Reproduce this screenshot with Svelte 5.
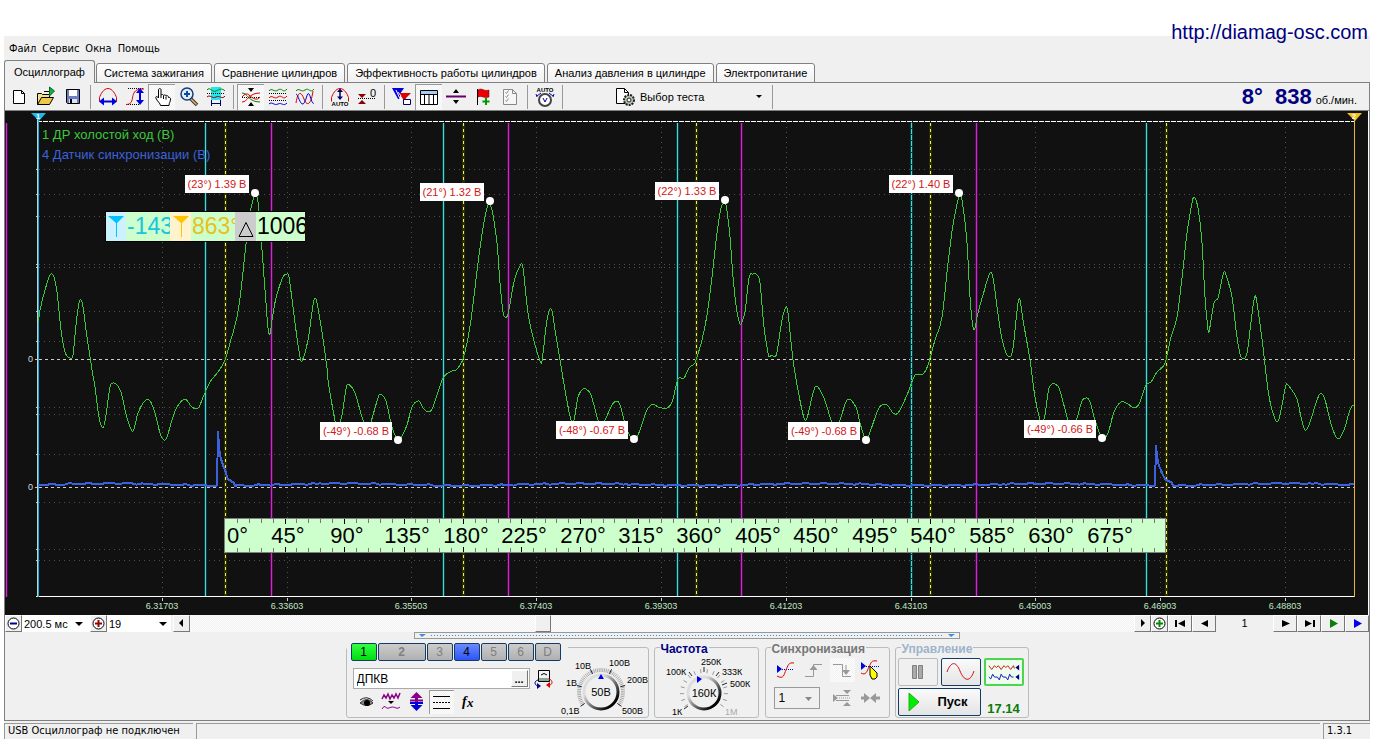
<script lang="ts">
    type Point = [number, number];

    const menu = ["Файл", "Сервис", "Окна", "Помощь"];
    const tabs = [
        "Осциллограф",
        "Система зажигания",
        "Сравнение цилиндров",
        "Эффективность работы цилиндров",
        "Анализ давления в цилиндре",
        "Электропитание",
    ];
    let activeTab = $state(0);

    const dots = (y: number, x1 = 2, x2 = 20) =>
        `<path d="M${x1} ${y}H${x2}" stroke="#000" stroke-dasharray="1 1"/>`;

    const icons: Record<string, string> = {
        new: `<path d="M5.500 4.500h8l3 3v10h-11z" fill="#fff" stroke="#000"/><path d="M13.500 4.500v3h3" fill="none" stroke="#000"/>`,
        open: `<path d="M2.500 18.500v-11h4l1 1h7v3" fill="#f5e08a" stroke="#000"/><path d="M2.500 18.500l4-7h12l-4 7z" fill="#ecc94b" stroke="#000"/><path d="M9 5.500h5" stroke="#000"/><path d="M14.500 1v9l5-5z" fill="#18b030" stroke="#063"/>`,
        save: `<path d="M4.500 3.500h13v14h-12l-1-1z" fill="#6b7fc0" stroke="#000"/><path d="M7 4h8v6H7z" fill="#fff"/><path d="M7 13h8v4H7z" fill="#dfe4ee"/><path d="M8 13h2v4H8z" fill="#000"/>`,
        widthFit: `<path d="M2.500 15.500v-4c1-3 4-9 8.500-9s7.500 6 8.500 9v4" fill="none" stroke="#d00"/><path d="M5 15.500h12" stroke="#00d" stroke-width="2"/><path d="M2 15.500l5-4v8zM20 15.500l-5-4v8z" fill="#00d"/>`,
        heightFit: `${dots(2.5, 4, 20)}${dots(18.5, 2, 16)}<path d="M2 18.500c7 0 6-6 7-9s2-7 11-6.500" fill="none" stroke="#d00"/><path d="M16 5v11" stroke="#00d" stroke-width="2"/><path d="M16 2l4 5h-8zM16 19l4-5h-8z" fill="#00d"/>`,
        hand: `<path d="M7.500 12V4c0-2 2.500-2 2.500 0v5c1-1 2.500-.5 2.500.5 1-1 2.500-.5 2.500.5 1-.8 2.500-.3 2.500 1.500 1-.4 2 .3 2 1.500 0 3-1.500 3.500-1.500 6.500H9.500c0-2-3.500-4.500-4.700-7.500-.5-1.500 1.200-2.200 2.700 0z" fill="#fff" stroke="#000"/><path d="M10 9v3M12.500 10v3M15 10.500v3" stroke="#000"/>`,
        zoom: `<path d="M12.500 12.500l6.500 6.500" stroke="#333" stroke-width="3.500"/><path d="M13 13l5.500 5.500" stroke="#f0b060" stroke-width="1.500"/><circle cx="9" cy="8" r="6" fill="#dff0ff" stroke="#1b3c78" stroke-width="1.500"/><path d="M9 5v6M6 8h6" stroke="#0b4aa8" stroke-width="2"/>`,
        cursor: `<path d="M6 1h10v13H6z" fill="#22e6ef"/><path d="M2 4c3-4 5 3 9 1s6-3 9 0" fill="none" stroke="#080"/>${dots(7.5)}<path d="M2 11c3-3 5 2 9 0s6 3 9-1" fill="none" stroke="#900"/><path d="M7 17.500h8M6.500 14v6M15.500 14v6" stroke="#006"/>`,
        cross: `${dots(11.5)}<path d="M2 7c6 0 6 9 18 9" fill="none" stroke="#080"/><path d="M2 16c6 0 6-9 18-9" fill="none" stroke="#d00"/><path d="M2 11q4-5 7-2t6 4 5-2" fill="none" stroke="#d00"/><path d="M8 2h6l-3 4zM8 20h6l-3-4z" fill="#000"/>`,
        waves3: `<path d="M2 5c3-4 5 2 9-1s5 4 9-1" fill="none" stroke="#080"/>${dots(7.5)}<path d="M2 12c3-4 5 2 9-1s5 4 9-1" fill="none" stroke="#d00"/>${dots(14.5)}<path d="M2 18c3-3 5 2 9 0s5 3 9-1" fill="none" stroke="#00d"/>`,
        waves2: `<path d="M2 5c3-4 5 2 9-1s5 4 9-1" fill="none" stroke="#080"/><path d="M2 17c2-12 5-12 8-4s7 6 9-8" fill="none" stroke="#d00"/><path d="M2 8c2 0 4 11 7 10s4-13 6-10 3 11 5 9" fill="none" stroke="#00d"/>`,
        auto: `<path d="M2.500 15.500v-4c1-3 4-9 8.500-9s7.500 6 8.500 9v4" fill="none" stroke="#d00"/><path d="M11 4v9" stroke="#006" stroke-width="1.500"/><path d="M11 2.500l3 3.500H8zM11 14l3-3.500H8z" fill="#006"/><text x="11" y="20" font-size="6" font-weight="700" text-anchor="middle">AUTO</text>`,
        zero: `${dots(12.5)}<path d="M2 8h8l-4 4zM2 18h8l-4-4z" fill="#800"/><text x="17" y="11" font-size="11" text-anchor="middle">0</text>`,
        trigger: `<path d="M1 2h12L9 8v5H7z" fill="#00d"/><path d="M8 7h12l-5 5-1 4z" fill="#d00"/><path d="M7 6l3 4M5 4l5 11" stroke="#fff"/><path d="M12.500 13.500h7v5h-7z" fill="#fff" stroke="#006"/>`,
        table: `<path d="M2.500 4.500h17v14h-17z" fill="#fff" stroke="#000"/><path d="M3 5h16v3H3z" fill="#a8cdf5"/><path d="M3 8.500h16M6.500 8v10M11 8v10M15.500 8v10" stroke="#000"/>`,
        split: `<path d="M1 10.500h20" stroke="#606" stroke-width="2"/><path d="M8 7h6l-3-4zM8 14h6l-3 4z" fill="#000"/>`,
        flag: `<path d="M5.500 3v16" stroke="#000"/><path d="M6 4c4-3 6 2 11 0v7c-5 2-7-2-11 0z" fill="#e00" stroke="#600" stroke-width=".5"/><path d="M14 12v7M10.500 15.500h7" stroke="#090" stroke-width="2"/>`,
        check: `<path d="M4.500 3.500h9l4 4v11h-13z" fill="#f6f6f6" stroke="#888"/><path d="M13.500 3.500v4h4M6.500 6.500l1 1 2-3M6.500 10.500l1 1 2-3M6.500 14.500l1 1 2-3" fill="none" stroke="#888"/>`,
        meter: `<text x="11" y="6" font-size="6" font-weight="700" text-anchor="middle">AUTO</text><circle cx="11" cy="14" r="6" fill="#fff" stroke="#444" stroke-width="2"/><path d="M9 12l2 4 2-4" fill="none" stroke="#00a"/><path d="M3 10l4-3M19 10l-4-3M2 8l1 3M20 8l-1 3" stroke="#00a"/>`,
        eye: `<path d="M5 12q7-7 13 0-6 5-13 0z" fill="#888" stroke="#333"/><circle cx="12" cy="12" r="3" fill="#000"/><path d="M5 9q7-5 13 1" fill="none" stroke="#222"/>`,
        noise: `<path d="M2 8l2-4 2 3 2-4 2 5 2-4 2 3 2-4 2 4 2-5" fill="none" stroke="#808" stroke-width="1.500"/><path d="M8 10h6l-3 3z" fill="#000"/><path d="M2 18q2-4 3.500-2t3.500 1 3.500-1 3.500 1 4-1" fill="none" stroke="#808"/>`,
        updown: `<path d="M10 4h3v7h-3z" fill="#808"/><path d="M10 11h3v7h-3z" fill="#00d"/><path d="M11.500 1l6 6h-12z" fill="#808"/><path d="M11.500 20l6-6h-12z" fill="#00d"/><path d="M5 9.500h13" stroke="#808" stroke-width="2"/><path d="M5 12h13" stroke="#00d" stroke-width="2"/>`,
        lines: `<path d="M3 5.500h17M3 17.500h17" stroke="#000"/><path d="M3 11.500h17" stroke="#000" stroke-dasharray="2 1"/>`,
        fx: `<text x="7" y="15" font-size="14" font-style="italic" font-weight="700" font-family="Liberation Serif, serif">f</text><text x="12" y="16" font-size="13" font-style="italic" font-weight="700" font-family="Liberation Serif, serif">x</text>`,
        swap: `<path d="M6.500 2.500h11v11h-11z" fill="#f4f4f4" stroke="#000"/><path d="M7 10h10v3H7z" fill="#8a9"/><path d="M9 7q3-3 6 0" fill="none" stroke="#000"/><path d="M6 12c-4 1-4 5 0 6" fill="none" stroke="#008"/><path d="M5 15v6l4-3z" fill="#008"/><path d="M17 11c4 1 4 6 0 6" fill="none" stroke="#d00"/><path d="M18 14v6l-4-3z" fill="#d00"/>`,
        syncAuto: `<path d="M2 6l5 4-5 4z" fill="#00d"/><path d="M5 10.500h14" stroke="#00d" stroke-dasharray="1 1"/><path d="M2 17c7 4 7-2 9-6s2-8 8-7" fill="none" stroke="#d00"/>`,
        rise: `<path d="M2 17.500h8.500V5.500H19" fill="none" stroke="#999"/><path d="M10.500 6l4 5h-8z" fill="#999"/>`,
        fall: `<path d="M2 5.500h9.500v12H20" fill="none" stroke="#999"/><path d="M15 6v8" stroke="#999"/><path d="M15 16l4-5h-8z" fill="#999"/>`,
        syncHand: `<path d="M2 3l5 4-5 4z" fill="#00d"/><path d="M5 7.500h15" stroke="#00d" stroke-dasharray="1 1"/><path d="M2 14c5 3 6-2 8-6s2-7 8-6" fill="none" stroke="#d00"/><path d="M11 7l7 7v4l-2 2h-3l-2-4z" fill="#ff0" stroke="#000"/>`,
        levels: `<path d="M2 7l5 4-5 4zM12 3h8l-4 4zM12 19h8l-4-4z" fill="#999"/><path d="M5 8.500h13M5 13.500h13" stroke="#999"/><path d="M8 11h12" stroke="#999" stroke-dasharray="1 1"/>`,
        squeeze: `<path d="M2 11h4M16 11h5" stroke="#999" stroke-width="3"/><path d="M5 6l6 5-6 5zM17 6l-6 5 6 5z" fill="#999"/>`,
    };

    // "|" is a separator between the groups of buttons
    const toolbar: [string, string, boolean?][] = [
        ["new", "Новый"],
        ["open", "Открыть"],
        ["save", "Сохранить"],
        ["|", ""],
        ["widthFit", "Ширина"],
        ["heightFit", "Высота"],
        ["hand", "Рука", true],
        ["zoom", "Лупа"],
        ["cursor", "Курсоры"],
        ["|", ""],
        ["cross", "Наложить", true],
        ["waves3", "Разделить"],
        ["waves2", "Группы"],
        ["|", ""],
        ["auto", "Авто"],
        ["zero", "Ноль"],
        ["|", ""],
        ["trigger", "Маркеры"],
        ["table", "Таблица", true],
        ["split", "Линия"],
        ["flag", "Флаг"],
        ["check", "Отчёт"],
        ["|", ""],
        ["meter", "Автоизмерение"],
        ["|", ""],
    ];

    const plot = { left: 38, right: 1354, top: 121, bottom: 596 };
    const gridY = [169, 194, 216, 264, 267, 311, 341, 407, 414, 454, 502, 549, 560];
    const zeroY = [359, 487];
    const timeMarks: [number, string][] = [
        [162, "6.31703"],
        [287, "6.33603"],
        [411, "6.35503"],
        [536, "6.37403"],
        [661, "6.39303"],
        [786, "6.41203"],
        [911, "6.43103"],
        [1035, "6.45003"],
        [1160, "6.46903"],
        [1285, "6.48803"],
    ];
    const magenta = [6, 271, 508, 741, 976];
    const cyan = [205, 443, 677, 911, 1146];
    const strokes = [225, 463, 696, 930, 1166];
    const peaks: [number, number, string][] = [
        [255, 193, "(23°) 1.39 В"],
        [490, 201, "(21°) 1.32 В"],
        [725, 200, "(22°) 1.33 В"],
        [959, 193, "(22°) 1.40 В"],
        [398, 440, "(-49°) -0.68 В"],
        [634, 439, "(-48°) -0.67 В"],
        [866, 440, "(-49°) -0.68 В"],
        [1102, 438, "(-49°) -0.66 В"],
    ];

    const pressure: Point[] = [
        [38,322],[40,310],[45,290],[50,275],[52,274],[54,277],[57,292],[61,330],[65,352],[70,358],[73,355],[76,325],[79,303],[81,300],[83,307],[87,337],[92,370],
        [95,387],[99,417],[103,428],[106,415],[110,387],[113,383],[117,385],[121,392],[127,418],[132,431],[134,429],[138,413],[145,401],[150,401],[155,413],[160,433],[164,440],[167,437],[172,420],[177,407],[185,399],[191,406],[196,409],[199,407],[204,395],[210,382],[218,372],[225,360],
        [230,343],[237,317],[241,290],[245,253],[250,213],[254,197],[255,195],[258,202],[262,250],[266,303],[268,328],[270,334],[272,320],[276,298],[283,277],[287,274],[289,277],[295,323],[300,357],[302,361],[308,340],[313,305],[315,298],[317,303],[322,332],[327,368],
        [328,380],[333,410],[337,427],[342,415],[346,389],[348,384],[355,393],[362,417],[368,430],[373,415],[378,398],[380,394],[386,401],[392,427],[398,440],[402,436],[407,425],[412,407],[419,401],[423,408],[429,412],[433,407],[443,378],[452,371],[456,370],[460,365],[463,359],
        [467,343],[471,320],[475,288],[478,263],[483,228],[487,208],[489,204],[492,210],[497,243],[500,283],[503,312],[505,317],[508,314],[514,282],[521,264],[523,268],[528,313],[533,337],[540,361],[542,361],[546,327],[549,311],[552,311],[555,330],[560,360],[565,390],
        [571,420],[574,420],[578,397],[583,389],[586,389],[591,395],[598,420],[601,425],[605,420],[612,405],[617,401],[620,405],[627,430],[633,439],[638,435],[647,410],[653,404],[658,407],[667,408],[672,402],[677,382],[679,378],[684,378],[689,368],[695,363],[697,357],
        [702,340],[707,315],[712,277],[717,233],[721,208],[723,204],[726,205],[730,237],[733,277],[737,312],[740,324],[741,324],[745,312],[749,278],[753,274],[757,275],[760,283],[764,327],[768,353],[769,357],[772,355],[775,357],[777,352],[782,320],[786,307],[788,313],[793,360],
        [798,390],[804,418],[807,418],[812,397],[816,386],[824,398],[831,420],[835,427],[840,420],[847,400],[856,407],[860,423],[866,440],[870,432],[879,408],[887,405],[893,413],[898,413],[907,395],[912,382],[915,375],[923,374],[928,365],
        [935,340],[942,317],[948,263],[953,225],[959,197],[962,200],[967,243],[970,297],[973,327],[975,328],[977,317],[983,295],[990,273],[993,278],[1000,328],[1005,350],[1010,357],[1013,348],[1018,303],[1020,300],[1023,320],[1030,360],
        [1035,397],[1041,422],[1045,415],[1049,388],[1058,386],[1062,398],[1068,420],[1072,427],[1077,418],[1082,401],[1087,398],[1090,402],[1095,420],[1102,438],[1108,433],[1114,412],[1121,402],[1128,404],[1134,408],[1139,404],[1146,385],[1151,382],[1157,372],[1165,363],
        [1171,337],[1177,317],[1182,278],[1187,233],[1192,203],[1194,197],[1198,208],[1202,243],[1205,297],[1208,330],[1209,332],[1214,303],[1218,298],[1224,272],[1227,278],[1232,297],[1237,337],[1241,357],[1247,353],[1251,322],[1255,296],[1258,310],[1263,347],
        [1268,390],[1272,410],[1277,422],[1280,415],[1286,385],[1288,385],[1297,399],[1301,417],[1305,430],[1309,425],[1317,400],[1321,393],[1325,400],[1332,427],[1338,439],[1344,430],[1350,410],[1354,405],
    ];

    function smooth(p: Point[]) {
        let d = `M${p[0]}`;
        for (let i = 0; i < p.length - 1; i++) {
            const a = p[i - 1] ?? p[i];
            const b = p[i];
            const c = p[i + 1];
            const e = p[i + 2] ?? c;
            const k = (c[0] - b[0]) / 3;
            const s1 = a === b ? 0 : (c[1] - a[1]) / (c[0] - a[0]);
            const s2 = e === c ? 0 : (e[1] - b[1]) / (e[0] - b[0]);
            d += `C${b[0] + k} ${b[1] + s1 * k} ${c[0] - k} ${c[1] - s2 * k} ${c}`;
        }
        return d;
    }

    const spikes: Record<number, number[]> = {
        217: [485, 432, 446, 455, 459, 462, 465, 468, 470, 473, 477, 479, 480, 480, 481, 482, 482, 483],
        1155: [485, 446, 456, 461, 466, 468, 470, 473, 475, 477, 479, 480, 480, 481, 481, 482, 482, 483],
    };

    function syncTrace() {
        let d = "";
        for (let x = plot.left; x <= plot.right; x++) {
            const noise = Math.sin(x * 12.9) + Math.sin(x * 0.7) * 0.6;
            let y = 484.500 - Math.cos(((x - 110) / 235) * Math.PI * 2) + noise * 0.5;
            for (const start in spikes) {
                const i = x - Number(start);
                if (i >= 0 && i < spikes[start].length) y = spikes[start][i];
            }
            d += `${d ? "L" : "M"}${x} ${y.toFixed(1)}`;
        }
        return d;
    }

    // crankshaft angle to x, linear between the stroke marks
    function angleX(deg: number) {
        const i = Math.min(3, Math.floor(deg / 180));
        return Math.round(strokes[i] + ((strokes[i + 1] - strokes[i]) * (deg - i * 180)) / 180);
    }
    const degrees = Array.from({ length: 79 }, (_, i) => (i + 1) * 9);
    const angles = Array.from({ length: 15 }, (_, i) => (i + 1) * 45);

    const channels = ["1", "2", "3", "4", "5", "6", "D"];
    let sensor = $state("ДПКВ");

    function ticks(from: number, to: number, n: number, r1: number, r2: number) {
        let d = "";
        for (let i = 0; i <= n; i++) {
            const a = ((from + ((to - from) * i) / n) * Math.PI) / 180;
            const x = Math.sin(a);
            const y = -Math.cos(a);
            d += `M${x * r1} ${y * r1}L${x * r2} ${y * r2}`;
        }
        return d;
    }
</script>

{#snippet icon(name: string)}
    <svg class="icon" viewBox="0 0 22 22" aria-hidden="true">{@html icons[name]}</svg>
{/snippet}

{#snippet arrow(d: string, color = "#000")}
    <svg class="glyph" viewBox="0 0 13 13" aria-hidden="true"><path {d} fill={color} /></svg>
{/snippet}

{#snippet round(color: string, plus: boolean)}
    <svg class="glyph" viewBox="0 0 13 13" aria-hidden="true">
        <circle cx="6.5" cy="6.5" r="5.5" fill="#fff" stroke="#000" />
        <path d={plus ? "M3 6.5h7M6.5 3v7" : "M3 6.5h7"} stroke={color} stroke-width="2" />
    </svg>
{/snippet}

<div class="page">
    <a class="site" href="http://diamag-osc.com">http://diamag-osc.com</a>
    <div class="window">
        <nav class="menu">
            {#each menu as item}
                <button>{item}</button>
            {/each}
        </nav>

        <div class="tabs" role="tablist">
            {#each tabs as tab, i}
                <button role="tab" aria-selected={i === activeTab} class:active={i === activeTab} onclick={() => (activeTab = i)}>{tab}</button>
            {/each}
        </div>

        <main>
            <div class="toolbar">
                {#each toolbar as [name, title, pressed]}
                    {#if name === "|"}
                        <span class="sep"></span>
                    {:else}
                        <button class="tool" class:pressed aria-label={title}>{@render icon(name)}</button>
                    {/if}
                {/each}
                <label class="test">
                    <svg class="icon" viewBox="0 0 22 22" aria-hidden="true">
                        <path d="M2.500 2.500h8l4 4v11h-12z" fill="#fff" stroke="#000" />
                        <path d="M10.500 2.500v4h4" fill="none" stroke="#000" />
                        <circle cx="15" cy="14" r="5" fill="#b8c4b4" stroke="#222" stroke-width="2" stroke-dasharray="2 1" />
                        <circle cx="15" cy="14" r="2" fill="#fff" stroke="#222" />
                    </svg>
                    <span class="picker">
                        <select aria-label="Выбор теста"><option>Выбор теста</option></select>
                        {@render arrow("M5 5h6L8 8z")}
                    </span>
                </label>
                <span class="sep"></span>
                <output class="rpm"><b>8°</b><b>838</b><span>об./мин.</span></output>
            </div>

            <svg class="scope" viewBox="5 111 1363 504">
                <rect x="5" y="111" width="1363" height="504" fill="#111" />
                <g shape-rendering="crispEdges" transform="translate(.5 .5)" fill="none">
                    <g stroke="#505050" stroke-dasharray="1 4">
                        {#each gridY as y}
                            <path d="M{plot.left} {y}H{plot.right}" />
                        {/each}
                        {#each timeMarks as [x]}
                            <path d="M{x} {plot.top}V{plot.bottom}" />
                        {/each}
                    </g>
                    <g stroke="#ccc">
                        {#each gridY as y}
                            <path d="M35 {y}h3" />
                        {/each}
                        {#each timeMarks as [x]}
                            <path d="M{x} 597v3" />
                        {/each}
                        {#each zeroY as y}
                            <path d="M34 {y}h4" />
                            <path d="M38 {y}H{plot.right}" stroke-dasharray="3 3" />
                        {/each}
                    </g>
                    <!-- every cursor line has a dim glow one pixel wide on both sides -->
                    {#each magenta as x}
                        <path d="M{x} 122V596" stroke="#4a0a4a" stroke-width="3" />
                        <path d="M{x} 122V596" stroke="#c82fc8" />
                    {/each}
                    {#each cyan as x}
                        <path d="M{x} 122V596" stroke="#083c3c" stroke-width="3" />
                        <path d="M{x} 122V596" stroke="#4fd6d6" stroke-dasharray={x === 911 ? "5 1" : undefined} />
                    {/each}
                    {#each strokes as x}
                        <path d="M{x} 122V596" stroke="#2c2c04" stroke-width="3" />
                        <path d="M{x} 122V596" stroke="#f0f050" stroke-dasharray="3 3" />
                    {/each}
                    <path d="M36 121H{plot.right}" stroke="#fff" stroke-dasharray="5 1" />
                    <path d="M35 596H{plot.right}" stroke="#fff" />
                    <path d="M1354 118V596" stroke="#e8b830" />
                    <path d="M37 118V596" stroke="#b8d8e0" />
                    <path d="M38 118V596" stroke="#18a8d8" />
                </g>

                <g shape-rendering="crispEdges" fill="none">
                    <path d={syncTrace()} stroke="#3b62dc" stroke-width="2" stroke-linejoin="round" />
                    <path d={smooth(pressure)} stroke="#3cc83c" />
                </g>

                <path d="M31 113h15l-7 8z" fill="#22b8e8" />
                <text x="38" y="119" font-size="7" font-weight="700" fill="#fff" text-anchor="middle">1</text>
                <path d="M1347 113h15l-7 8z" fill="#f0c020" />
                <text x="1354" y="119" font-size="7" font-weight="700" fill="#fff" text-anchor="middle">2</text>

                <text x="42" y="139" font-size="13" fill="#3cc83c">1 ДР холостой ход (В)</text>
                <text x="42" y="159" font-size="13" fill="#3b62dc">4 Датчик синхронизации (В)</text>
                {#each zeroY as y}
                    <text x="33" y={y + 3} font-size="9" fill="#ddd" text-anchor="end">0</text>
                {/each}
                {#each timeMarks as [x, time]}
                    <text {x} y="609" font-size="9" fill="#bfe8c4" text-anchor="middle">{time}</text>
                {/each}

                {#each peaks as [x, y, label]}
                    {@const w = label.startsWith("(-") ? 72 : 64}
                    <rect x={x - 6 - w} y={y - 18} width={w} height="18" fill="#fff" />
                    <text x={x - 6 - w / 2} y={y - 5} font-size="11" fill="#d01818" text-anchor="middle">{label}</text>
                    <circle cx={x} cy={y} r="4" fill="#fff" />
                {/each}

                <rect x="105" y="211" width="200" height="31" fill="#000" />
                <rect x="106" y="212" width="199" height="29" fill="#cfc" />
                <rect x="106" y="212" width="20" height="29" fill="#ccf2ff" />
                <rect x="170" y="212" width="21" height="29" fill="#fff2cc" />
                <rect x="235" y="212" width="21" height="29" fill="#ccc" />
                <path d="M108 216h16l-7 7v14h-1v-14z" fill="#00c0ff" />
                <path d="M173 216h16l-7 7v14h-1v-14z" fill="#ffc400" />
                <path d="M239 236.500h14l-7-14z" fill="none" stroke="#000" />
                <svg x="106" y="212" width="64" height="29"><text x="21" y="22" font-size="23" fill="#18c4e0">-143°</text></svg>
                <svg x="170" y="212" width="65" height="29"><text x="22" y="22" font-size="23" fill="#e8c020">863°</text></svg>
                <svg x="235" y="212" width="70" height="29"><text x="22" y="22" font-size="23">1006°</text></svg>

                <rect x="224" y="518" width="942" height="35" fill="#808080" />
                <rect x="225" y="519" width="940" height="33" fill="#cfc" />
                <g shape-rendering="crispEdges">
                    {#each degrees as deg}
                        {@const major = deg % 45 === 0}
                        {@const h = major ? 5 : 4}
                        <rect x={angleX(deg)} y="519" width="1" height={h} fill={major ? "#000" : "#777"} />
                        <rect x={angleX(deg)} y={552 - h} width="1" height={h} fill={major ? "#000" : "#777"} />
                    {/each}
                </g>
                <text x="227" y="543" font-size="22">0°</text>
                {#each angles as deg}
                    <text x={angleX(deg) + 3} y="543" font-size="22" text-anchor="middle">{deg}°</text>
                {/each}
            </svg>

            <div class="seek">
                <button class="narrow" aria-label="Сжать">{@render round("#008", false)}</button>
                <span class="picker span">
                    <select aria-label="Развёртка"><option>200.5 мс</option></select>
                    {@render arrow("M2 5h8L6 9z")}
                </span>
                <button class="narrow" aria-label="Растянуть">{@render round("#900", true)}</button>
                <span class="picker count">
                    <select aria-label="Масштаб"><option>19</option></select>
                    {@render arrow("M5 5h8L9 9z")}
                </span>
                <button class="narrow" aria-label="Влево">{@render arrow("M8 2v8L4 6z")}</button>
                <div class="track"><div class="thumb"></div></div>
                <button class="narrow" aria-label="Вправо">{@render arrow("M5 2v8l4-4z")}</button>
                <button class="narrow" aria-label="Добавить">{@render round("#080", true)}</button>
                <button aria-label="В начало">{@render arrow("M1 3h2v7H1zM11 3v7L4 6.500z")}</button>
                <button aria-label="Назад">{@render arrow("M10 3v7L3 6.500z")}</button>
                <output class="frame">1</output>
                <button aria-label="Вперёд">{@render arrow("M3 3v7l8-3.500z")}</button>
                <button aria-label="В конец">{@render arrow("M2 3v7l7-3.500zM10 3h2v7h-2z")}</button>
                <button aria-label="Воспроизвести">{@render arrow("M3 2v9l8-4.500z", "#0a7d0a")}</button>
                <button aria-label="Воспроизвести всё">{@render arrow("M3 2v9l8-4.500z", "#00e")}</button>
            </div>

            <button class="expander" aria-label="Свернуть панель">
                <svg viewBox="0 0 9 5" aria-hidden="true"><path d="M1 1h7L4 4z" fill="#3a8fe0" /></svg>
                <i></i>
                <svg viewBox="0 0 9 5" aria-hidden="true"><path d="M1 1h7L4 4z" fill="#3a8fe0" /></svg>
            </button>

            <div class="panels">
                <section class="panel input">
                    <div class="left">
                        <div class="channels">
                            {#each channels as ch}
                                <button class="ch{ch}">{ch}</button>
                            {/each}
                        </div>
                        <div class="sensor">
                            <span class="field">
                                <input type="text" aria-label="Датчик" bind:value={sensor} />
                                <button aria-label="Выбрать датчик">...</button>
                            </span>
                            <button class="flat" aria-label="Сменить датчик">{@render icon("swap")}</button>
                        </div>
                        <div class="row">
                            <button class="flat" aria-label="Видимость">{@render icon("eye")}</button>
                            <button class="flat" aria-label="Фильтр">{@render icon("noise")}</button>
                            <button class="flat" aria-label="Инверсия">{@render icon("updown")}</button>
                            <button class="flat pressed" aria-label="Уровни">{@render icon("lines")}</button>
                            <button class="flat" aria-label="Функция">{@render icon("fx")}</button>
                        </div>
                    </div>
                    <svg class="knob volts" viewBox="-42 -42 90 68">
                        <defs>
                            <linearGradient id="rim" x1="0" y1="0" x2="1" y2="1">
                                <stop offset=".3" stop-color="#ddd" />
                                <stop offset=".85" stop-color="#000" />
                            </linearGradient>
                        </defs>
                        <path d={ticks(-125, 125, 54, 20, 24)} stroke="#aaa" />
                        <path d={ticks(-125, 125, 5, 20, 25)} stroke="#222" />
                        <circle r="17" fill="#f0f0f0" stroke="url(#rim)" stroke-width="3" />
                        <path d="M0-18l3 5h-6z" fill="#00e" />
                        <text y="4" font-size="11" text-anchor="middle">50В</text>
                        <g font-size="9">
                            <text x="-26" y="-23">10В</text>
                            <text x="8" y="-26">100В</text>
                            <text x="26" y="-9">200В</text>
                            <text x="-35" y="-6">1В</text>
                            <text x="-40" y="22">0,1В</text>
                            <text x="21" y="22">500В</text>
                        </g>
                    </svg>
                </section>

                <section class="panel rate">
                    <h2>Частота</h2>
                    <svg class="knob" viewBox="-47 -37 100 62">
                        <path d={ticks(-125, 125, 15, 20, 24)} stroke="#999" />
                        <path d="M0-21v-5M-12-17l-3-4M12-17l3-4M18-8l5-2M-16 13l-4 3" stroke="#222" />
                        <circle r="16" fill="#f0f0f0" stroke="url(#rim)" stroke-width="3" />
                        <path d="M-7-17v7l5-4z" fill="#00e" />
                        <text y="4" font-size="11" text-anchor="middle">160К</text>
                        <g font-size="9">
                            <text x="-38" y="-18">100К</text>
                            <text x="-3" y="-28">250К</text>
                            <text x="18" y="-18">333К</text>
                            <text x="26" y="-6">500К</text>
                            <text x="-32" y="22">1К</text>
                            <text x="21" y="22" fill="#aaa">1М</text>
                        </g>
                    </svg>
                </section>

                <section class="panel sync">
                    <h2>Синхронизация</h2>
                    <div class="row">
                        <button class="flat" aria-label="Авто">{@render icon("syncAuto")}</button>
                        <button class="flat" aria-label="По фронту">{@render icon("rise")}</button>
                        <button class="flat hatch" aria-label="По спаду">{@render icon("fall")}</button>
                        <button class="flat" aria-label="Вручную">{@render icon("syncHand")}</button>
                    </div>
                    <div class="row">
                        <span class="picker source">
                            <select aria-label="Канал синхронизации"><option>1</option></select>
                            {@render arrow("M3 5h7L6.500 9z", "#888")}
                        </span>
                        <button class="flat" aria-label="Уровень">{@render icon("levels")}</button>
                        <button class="flat" aria-label="Сжатие">{@render icon("squeeze")}</button>
                    </div>
                </section>

                <section class="panel run">
                    <h2>Управление</h2>
                    <div class="buttons">
                        <button class="pause" aria-label="Пауза">
                            <svg viewBox="0 0 38 26" aria-hidden="true"><path d="M13.500 6.500h4v13h-4zM19.500 6.500h4v13h-4z" fill="#aaa" stroke="#808080" /></svg>
                        </button>
                        <button aria-label="Непрерывно">
                            <svg viewBox="0 0 38 26" aria-hidden="true"><path d="M5 13C9 2 14 2 18 12s10 12 14 0" fill="none" stroke="#d01010" /></svg>
                        </button>
                        <button class="on" aria-label="Прокрутка">
                            <svg viewBox="0 0 38 26" aria-hidden="true">
                                <path d="M3 6l3 4 3-4 2 2 2-2 3 4 3-4 2 2 2-2 3 4 3-4 1 3" fill="none" stroke="#d01010" />
                                <path d="M3 18l2 2 2-5 2 3 3 0 2 3 2-6 2 3 3 0 2 3 2-6 2 3h2" fill="none" stroke="#1010c0" />
                                <path d="M35 5v6l-4-3zM35 15v6l-4-3z" fill="#008" />
                            </svg>
                        </button>
                        <button class="start">
                            <svg viewBox="0 0 12 20" aria-hidden="true"><path d="M1 1l10 9-10 9z" fill="#0e0" stroke="#2a2" /></svg>
                            Пуск
                        </button>
                        <output>17.14</output>
                    </div>
                </section>
            </div>
        </main>

        <footer>
            <span class="state">USB Осциллограф не подключен</span>
            <span class="info"></span>
            <span class="version">1.3.1</span>
        </footer>
    </div>
</div>

<style>
    :global(body) {
        background: #fff;
    }

    .page {
        position: relative;
        padding: 36px 12px 5px 4px;
        font: 11px/14px "Liberation Sans", Arial, sans-serif;
        color: #000;
    }

    button,
    select,
    input {
        margin: 0;
        padding: 0;
        border: 0;
        border-radius: 0;
        background: none;
        font: inherit;
        color: inherit;
    }

    svg {
        display: block;
    }

    .site {
        position: absolute;
        top: 20px;
        right: 14px;
        font-size: 20px;
        line-height: 24px;
        color: navy;
        text-decoration: none;
    }

    .window {
        background: #f0f0f0;
    }

    .menu {
        display: flex;
        gap: 6px;
        box-sizing: border-box;
        height: 24px;
        padding: 2px 5px 0;
        font-family: "DejaVu Sans Condensed", "DejaVu Sans", sans-serif;
    }

    .tabs {
        display: flex;
        align-items: flex-end;
        gap: 2px;
        height: 23px;
        box-shadow: inset 0 -1px #808080;
    }

    .tabs button {
        height: 20px;
        padding: 0 7px;
        border: 1px solid #808080;
        border-radius: 3px 3px 0 0;
        background: linear-gradient(#fff, #f0f0f0);
        white-space: nowrap;
    }

    .tabs .active {
        height: 23px;
        margin-right: -1px;
        padding: 0 9px;
        border-bottom: 0;
        background: #f0f0f0;
    }

    main {
        border: 1px solid #808080;
        border-top: 0;
    }

    .toolbar {
        display: flex;
        align-items: center;
        height: 27px;
        border-bottom: 1px solid #808080;
    }

    .tool,
    .flat {
        display: grid;
        place-items: center;
        width: 27px;
        height: 26px;
    }

    .icon {
        width: 22px;
        height: 22px;
    }

    .pressed,
    .hatch {
        background: repeating-conic-gradient(#fff 0 25%, #f0f0f0 0 50%) 0 0 / 2px 2px;
    }

    .pressed {
        box-shadow: inset 1px 1px #999;
    }

    .sep {
        flex: none;
        width: 8px;
        height: 24px;
        background: linear-gradient(#999, #999) center / 1px 100% no-repeat;
    }

    .test {
        display: flex;
        align-items: center;
        gap: 4px;
        width: 154px;
        margin-left: 48px;
    }

    .picker {
        display: grid;
        flex: 1;
        align-items: center;
        height: 17px;
    }

    .picker > :global(*) {
        grid-area: 1 / 1;
    }

    .picker > :global(svg) {
        justify-self: end;
        margin-right: 4px;
        pointer-events: none;
    }

    select {
        appearance: none;
        width: 100%;
        height: 100%;
    }

    .glyph {
        width: 13px;
        height: 13px;
    }

    .rpm {
        display: flex;
        align-items: baseline;
        gap: 4px;
        margin: 0 12px 0 auto;
    }

    .rpm b {
        font-size: 22px;
        line-height: 24px;
        color: navy;
    }

    .rpm b:first-child {
        margin-right: 8px;
    }

    .scope {
        width: 100%;
        box-sizing: border-box;
        border-right: 1px solid #fff;
    }

    .seek {
        display: flex;
        height: 17px;
    }

    .seek button {
        display: grid;
        flex: none;
        place-items: center;
        width: 24px;
        border: 1px solid;
        border-color: #fff #777 #777 #fff;
        background: #f0f0f0;
    }

    .seek .narrow {
        width: 17px;
    }

    .seek .picker {
        flex: none;
        background: #fff;
    }

    .seek .span {
        width: 68px;
    }

    .seek .count {
        width: 64px;
        margin-right: 2px;
    }

    .seek select {
        padding-left: 2px;
    }

    .track {
        flex: 1;
        background: repeating-conic-gradient(#fff 0 25%, #f0f0f0 0 50%) 0 0 / 2px 2px;
    }

    .thumb {
        box-sizing: border-box;
        width: 16px;
        height: 17px;
        margin-left: 36.5%;
        border: 1px solid;
        border-color: #fff #777 #777 #fff;
        background: #f0f0f0;
    }

    .frame {
        width: 57px;
        text-align: center;
        line-height: 17px;
    }

    .expander {
        display: flex;
        align-items: center;
        box-sizing: border-box;
        width: 40%;
        height: 7px;
        margin: 0 auto;
        padding: 0 3px;
        border: 1px solid #999;
    }

    .expander svg {
        width: 9px;
        height: 5px;
    }

    .expander i {
        flex: 1;
        height: 1px;
        margin: 0 4px;
        background: repeating-linear-gradient(90deg, #3a8fe0 0 1px, transparent 1px 3px);
    }

    .panels {
        display: flex;
        justify-content: center;
        gap: 5px;
        padding: 8px 0 2px;
    }

    .panel {
        box-sizing: border-box;
        height: 71px;
        border: 1px solid #bbb;
        border-radius: 3px;
    }

    h2 {
        width: max-content;
        margin: -6px 0 0 5px;
        padding: 0 1px;
        background: #f0f0f0;
        font-size: 12px;
        line-height: 14px;
        font-weight: 700;
        color: navy;
    }

    .sync h2 {
        color: #777;
    }

    .run h2 {
        color: #9db4cc;
    }

    .input {
        display: flex;
        width: 303px;
    }

    .left {
        width: 212px;
        margin-top: -5px;
    }

    .channels {
        display: flex;
        gap: 1px;
        width: 217px;
        padding: 0 0 0 4px;
        background: #f0f0f0;
    }

    .channels button {
        width: 26px;
        height: 18px;
        border: 1px solid #123c66;
        border-radius: 2px;
        background: linear-gradient(#ccc, #b0b0b0);
        font-size: 12px;
        color: #808080;
    }

    .channels .ch1 {
        background: linear-gradient(#3f4, #0d1);
        color: #000;
    }

    .channels .ch2 {
        width: 48px;
        font-weight: 700;
    }

    .channels .ch4 {
        background: linear-gradient(#6a8aff, #2c55f5);
        color: #000;
    }

    .sensor {
        display: flex;
        align-items: center;
        gap: 1px;
        margin: 7px 0 0 6px;
        height: 21px;
    }

    .field {
        display: flex;
        box-sizing: border-box;
        width: 177px;
        height: 21px;
        padding: 1px;
        border: 1px solid #aaa;
        background: #fff;
    }

    .field input {
        flex: 1;
        min-width: 0;
        padding-left: 2px;
        font-size: 12px;
    }

    .field button {
        width: 17px;
        border: 1px solid;
        border-color: #fff #777 #777 #fff;
        background: #f0f0f0;
        font-weight: 700;
        line-height: 8px;
    }

    .row {
        display: flex;
        align-items: center;
    }

    .left .row {
        margin: 1px 0 0 7px;
    }

    .flat {
        width: 25px;
        height: 24px;
    }

    .knob {
        overflow: visible;
    }

    .volts {
        width: 90px;
        height: 68px;
        margin-top: 2px;
    }

    .rate {
        width: 105px;
    }

    .rate .knob {
        width: 100px;
        height: 62px;
        margin-left: 2px;
    }

    .sync {
        width: 125px;
        margin-left: 1px;
    }

    .sync .row {
        gap: 3px;
        height: 28px;
        padding-left: 8px;
    }

    .source {
        box-sizing: border-box;
        flex: none;
        width: 46px;
        height: 22px;
        margin-right: 7px;
        border: 1px solid #999;
        font-size: 12px;
    }

    .source select {
        padding-left: 4px;
    }

    .run {
        width: 134px;
    }

    .buttons {
        display: grid;
        grid-template-columns: 40px 40px 40px;
        gap: 2px 3px;
        padding: 2px 2px 0;
    }

    .buttons button {
        box-sizing: border-box;
        height: 28px;
        border: 1px solid #123c66;
        border-radius: 2px;
        background: linear-gradient(#fafafa, #e4e4e4);
    }

    .buttons .pause {
        border-color: #bbb;
        background: none;
    }

    .buttons .on {
        border: 2px solid #4fd44f;
        background: #eefcee;
    }

    .buttons .start {
        display: flex;
        grid-column: span 2;
        align-items: center;
        gap: 18px;
        padding-left: 9px;
        font-size: 13px;
        font-weight: 700;
    }

    .start svg {
        width: 12px;
        height: 20px;
    }

    .buttons output {
        align-self: end;
        font-size: 13px;
        font-weight: 700;
        text-align: center;
        color: #0a7a0a;
    }

    footer {
        display: flex;
        gap: 3px;
        margin-top: 2px;
        font-family: "DejaVu Sans Condensed", "DejaVu Sans", sans-serif;
    }

    footer span {
        box-sizing: border-box;
        height: 16px;
        padding-left: 3px;
        border-top: 1px solid #999;
        border-left: 1px solid #999;
    }

    .state {
        width: 189px;
    }

    .info {
        flex: 1;
    }

    .version {
        width: 47px;
    }
</style>
